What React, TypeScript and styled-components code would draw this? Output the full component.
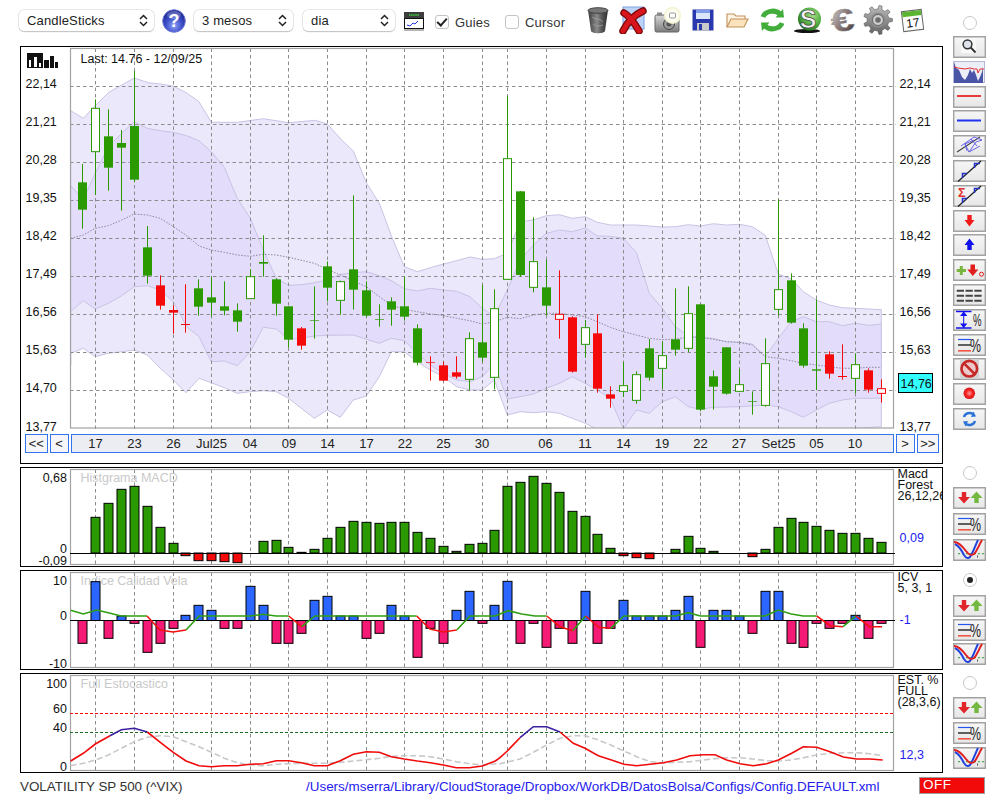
import React from "react";
import styled, { createGlobalStyle } from "styled-components";

const Global = createGlobalStyle`
  html, body { margin: 0; padding: 0; background: #fff; }
  body { font-family: "Liberation Sans", Arial, sans-serif; color: #222; }
`;

const Page = styled.div`
  width: 1000px;
  height: 800px;
  display: flex;
  flex-direction: column;
  overflow: hidden;
`;
const Toolbar = styled.div`
  height: 36px;
  padding: 4px 0 0 19px;
  box-sizing: border-box;
  display: flex;
  align-items: flex-start;
`;
const SelectBox = styled.div<{ $w: number; $ml?: number }>`
  width: ${(p) => p.$w}px;
  margin: 6px 0 0 ${(p) => p.$ml ?? 0}px;
  height: 21px;
  display: grid;
  align-items: center;
  background: #fff;
  border-radius: 5px;
  box-shadow: 0 0 0 0.5px #cfcfcf, 0 1px 1px #b9b9b9;
`;
const NativeSelect = styled.select`
  grid-area: 1 / 1;
  appearance: none;
  border: none;
  background: transparent;
  font: 13px "Liberation Sans", Arial, sans-serif;
  letter-spacing: 0.15px;
  color: #222;
  padding: 0 0 0 8px;
  height: 21px;
  width: 100%;
  outline: none;
`;
const Chevrons = styled.svg`
  grid-area: 1 / 1;
  justify-self: end;
  margin-right: 6px;
  width: 9px;
  height: 13px;
  pointer-events: none;
`;
const HelpSlot = styled.svg`
  margin: 5px 8px 0 8px;
  width: 24px;
  height: 24px;
`;
const WindowIcon = styled.svg`
  margin: 8px 0 0 9px;
  width: 20px;
  height: 20px;
`;
const Tick = styled.label<{ $ml: number; $w: number }>`
  margin: 11px 0 0 ${(p) => p.$ml}px;
  width: ${(p) => p.$w}px;
  display: flex;
  align-items: center;
  gap: 6px;
  font-size: 13px;
  letter-spacing: 0.2px;
  color: #333;
  height: 14px;
`;
const CheckInput = styled.input`
  appearance: none;
  margin: 0;
  width: 14px;
  height: 14px;
  box-sizing: border-box;
  border: 1px solid #c4c4c4;
  border-radius: 3px;
  background: #fff;
  display: grid;
  place-items: center;
  flex: none;
  &:checked::after {
    content: "";
    width: 4px;
    height: 8px;
    border: solid #222;
    border-width: 0 2px 2px 0;
    transform: translateY(-1px) rotate(42deg);
  }
`;
const IconRail = styled.div`
  margin-left: 11px;
  display: flex;
`;
const IconSlot = styled.div`
  width: 35px;
  height: 32px;
  display: flex;
  justify-content: center;
  align-items: center;
`;
const RadioInput = styled.input`
  appearance: none;
  margin: 0;
  width: 14px;
  height: 14px;
  box-sizing: border-box;
  border-radius: 50%;
  border: 1px solid #c8c8c8;
  background: #fff;
  display: grid;
  place-items: center;
  &:checked::after {
    content: "";
    width: 6px;
    height: 6px;
    border-radius: 50%;
    background: #222;
  }
`;
const TopRadio = styled.div`
  margin: 12px 0 0 33px;
  width: 14px;
  height: 14px;
  display: flex;
`;
const Body = styled.div`
  display: flex;
  height: 737px;
`;
const Charts = styled.div`
  margin: 10px 0 0 20px;
  width: 923px;
  display: flex;
  flex-direction: column;
  gap: 3px;
`;
const Panel = styled.section<{ $h: number }>`
  height: ${(p) => p.$h}px;
  box-sizing: border-box;
  border: 1px solid #000;
  background: #fff;
`;
const Plot = styled.svg<{ $h: number }>`
  display: block;
  width: 921px;
  height: ${(p) => p.$h}px;
  font-family: "Liberation Sans", Arial, sans-serif;
  font-size: 12.5px;
`;
const NavRow = styled.nav`
  padding-left: 4px;
  display: flex;
  gap: 2px;
  height: 19px;
`;
const NavBtn = styled.button<{ $w: number }>`
  width: ${(p) => p.$w}px;
  height: 19px;
  box-sizing: border-box;
  padding: 0;
  border: 1px solid #3473ee;
  background: #f6f6f8;
  font: 13px "Liberation Sans", Arial, sans-serif;
  color: #222;
`;
const DateBar = styled.div`
  width: 823px;
  height: 19px;
  box-sizing: border-box;
  border: 1px solid #3473ee;
  background: #ebedf3;
  position: relative;
`;
const DateLabel = styled.span`
  position: absolute;
  top: 1px;
  transform: translateX(-50%);
  font-size: 13px;
  line-height: 16px;
  color: #222;
`;
const Side = styled.aside`
  margin-left: 10px;
  width: 33px;
  display: flex;
  flex-direction: column;
`;
const BtnStack = styled.div<{ $gap: number }>`
  display: flex;
  flex-direction: column;
  gap: ${(p) => p.$gap}px;
`;
const ToolBtn = styled.button<{ $bare?: boolean }>`
  width: 33px;
  height: 22px;
  padding: 0;
  box-sizing: border-box;
  border: none;
  box-shadow: ${(p) => (p.$bare ? "none" : "inset 0 0 0 1.4px #a2a2a2")};
  background: ${(p) => (p.$bare ? "#fff" : "linear-gradient(#f7f7f7, #e6e6e6)")};
  display: block;
  svg {
    display: block;
    width: 33px;
    height: 22px;
  }
`;
const RadioGroup = styled.div<{ $h: number; $top: number }>`
  height: ${(p) => p.$h}px;
  margin-top: ${(p) => p.$top}px;
`;
const RadioRow = styled.div<{ $after: number }>`
  height: 14px;
  margin-bottom: ${(p) => p.$after}px;
  display: flex;
  justify-content: center;
`;
const Footer = styled.footer`
  height: 27px;
  padding-left: 20px;
  display: flex;
  align-items: center;
  font-size: 13.4px;
`;
const Symbol = styled.span`
  width: 286px;
  color: #333;
`;
const FilePath = styled.span`
  width: 613px;
  color: #2420ee;
  white-space: nowrap;
  letter-spacing: 0.02px;
`;
const OffLamp = styled.div`
  width: 66px;
  height: 17px;
  margin-bottom: 2px;
  box-sizing: border-box;
  border: 1.5px solid #9c9c9c;
  background: #f20a0a;
  color: #fff;
  font-size: 13.5px;
  line-height: 14px;
  padding-left: 3px;
  letter-spacing: 0.5px;
`;
const GreyTitle = styled.text`
  fill: #c9c9c9;
`;
const Blue = styled.text`
  fill: #2222ee;
`;
const Ink = styled.text<{ $end?: boolean }>`
  fill: #111;
  text-anchor: ${(p) => (p.$end ? "end" : "start")};
`;

/* ---------- data ---------- */
const XS = [
  82.3, 95.3, 108.3, 121.3, 134.3, 147.3, 160.3, 173.3, 185.3, 198.3, 211.3, 224.3, 237.3, 250.3, 263.3, 276.3, 288.3,
  301.3, 314.3, 327.3, 340.3, 353.3, 366.3, 379.3, 391.3, 404.3, 417.3, 430.3, 443.3, 456.3, 469.3, 482.3, 494.3,
  507.3, 520.3, 533.3, 546.3, 559.3, 572.3, 585.3, 597.3, 610.3, 623.3, 636.3, 649.3, 662.3, 675.3, 688.3, 700.3,
  713.3, 726.3, 739.3, 752.3, 765.3, 778.3, 791.3, 803.3, 816.3, 829.3, 842.3, 855.3, 868.3, 881.3,
];
const GRID_X = [95, 134, 173, 211, 250, 288, 327, 366, 404, 443, 482, 507, 546, 585, 623, 662, 700, 739, 778, 816, 855];
const GRID_Y = [86, 124, 162, 200, 238, 276, 314, 352, 390];

type C = [number, number, number, number, "g" | "w" | "r" | "h"];
const CANDLES: C[] = [
  [222, 416, 277, 359, "g"], [28, 315, 55, 185, "w"], [58, 302, 139, 233, "g"], [120, 362, 159, 173, "g"],
  [-57, 277, 108, 269, "g"], [408, 581, 472, 557, "g"], [556, 659, 586, 647, "r"], [646, 731, 660, 668, "r"],
  [583, 728, 702, 705, "r"], [568, 677, 595, 650, "g"], [560, 680, 622, 638, "g"], [574, 676, 649, 662, "g"],
  [640, 725, 661, 695, "g"], [538, 626, 560, 626, "w"], [436, 560, 516, 521, "g"], [565, 677, 568, 641, "g"],
  [649, 773, 649, 749, "g"], [711, 779, 715, 767, "r"], [589, 746, 690, 692, "g"], [514, 634, 529, 593, "g"],
  [572, 674, 575, 631, "w"], [316, 659, 538, 599, "g"], [574, 682, 601, 677, "g"], [643, 710, 688, 690, "g"],
  [622, 707, 634, 659, "g"], [560, 692, 649, 680, "g"], [703, 826, 715, 818, "g"], [799, 872, 817, 819, "r"],
  [815, 874, 826, 872, "r"], [799, 866, 847, 860, "r"], [727, 901, 746, 868, "w"], [585, 815, 757, 803, "g"],
  [598, 898, 656, 862, "w"], [18, 570, 206, 568, "w"], [303, 560, 304, 555, "g"], [382, 607, 515, 592, "w"],
  [509, 676, 592, 647, "g"], [541, 746, 673, 688, "h"], [679, 848, 682, 845, "r"], [690, 803, 713, 763, "w"],
  [673, 908, 730, 896, "r"], [889, 953, 913, 926, "r"], [816, 921, 887, 904, "w"], [844, 941, 854, 931, "w"],
  [747, 872, 775, 863, "g"], [754, 896, 797, 835, "w"], [595, 797, 748, 779, "g"], [589, 786, 671, 775, "w"],
  [643, 964, 643, 959, "g"], [841, 959, 859, 890, "g"], [772, 914, 772, 911, "g"], [837, 905, 884, 904, "w"],
  [904, 974, 934, 936, "g"], [745, 950, 821, 946, "w"], [328, 677, 599, 658, "w"], [550, 701, 571, 698, "g"],
  [700, 833, 715, 827, "g"], [628, 900, 838, 842, "g"], [784, 866, 793, 851, "r"], [763, 869, 858, 861, "r"],
  [790, 910, 824, 865, "w"], [835, 908, 841, 899, "r"], [868, 938, 896, 910, "h"],
];
const GREEN = "#2b9900";
const RED = "#f40a0a";

const MACD: (number | null)[] = [
  null, 172, 130, 88, 79, 139, 202, 250, 287, 302, 302, 305, 308, null, 244, 241, 262, 277, 268, 235, 202, 184, 187,
  190, 187, 187, 217, 235, 259, 274, 253, 250, 211, 79, 67, 49, 70, 97, 154, 169, 223, 265, 287, 293, 296, null, 268,
  229, 265, 274, null, null, 290, 268, 202, 175, 187, 199, 211, 220, 220, 235, 247,
];
const ICV = [
  550, 365, 535, 468, 490, 577, 550, 505, 466, 436, 451, 505, 505, 379, 436, 550, 550, 520, 421, 409, 468, 468, 535,
  520, 436, 468, 592, 505, 550, 451, 394, 490, 436, 364, 550, 490, 562, 505, 550, 394, 550, 505, 421, 468, 468, 468,
  451, 409, 562, 451, 451, 468, 520, 394, 394, 550, 562, 490, 505, 490, 466, 535, 490,
];

type P = [number, number];
const z5 = (pts: P[]): P[] => pts.map(([x, y]) => [x / 3, 90 + y / 3]);
const z6 = (pts: P[]): P[] => pts.map(([x, y]) => [440 + x / 3, 90 + y / 3]);
const line = (pts: P[]) => pts.map(([x, y]) => `${x.toFixed(1)},${y.toFixed(1)}`).join(" ");

const outerUp = [
  ...z5([[212, 62], [250, 85], [286, 47], [325, 8], [365, -15], [403, -36], [445, -22], [480, -18], [520, -12], [560, 9], [597, 35], [634, 97], [712, 97], [790, 86], [866, 98], [946, 91], [982, 102], [1025, 150], [1060, 183], [1099, 278], [1138, 340], [1175, 440], [1213, 530], [1252, 545], [1291, 533]]),
  ...z6([[0, 525], [50, 512], [90, 501], [127, 508], [163, 506], [202, 490], [241, 395], [280, 390], [319, 377], [358, 374], [397, 385], [436, 380], [472, 397], [511, 405], [589, 405], [628, 408], [667, 411], [706, 410], [745, 404], [781, 408], [820, 401], [859, 405], [898, 403], [937, 410], [976, 436], [1015, 552], [1054, 567], [1090, 605], [1129, 630], [1168, 645], [1207, 653], [1246, 655], [1285, 657], [1324, 659]]),
];
const outerLow = [
  ...z5([[212, 825], [212, 790], [250, 775], [286, 800], [325, 790], [365, 785], [403, 780], [442, 795], [481, 835], [520, 870], [558, 908], [597, 865], [634, 878], [673, 893], [712, 910], [751, 905], [790, 902], [829, 905], [866, 925], [904, 955], [943, 985], [982, 960], [1021, 982], [1060, 930], [1099, 918], [1138, 860], [1174, 785], [1213, 785], [1252, 815], [1291, 840]]),
  ...z6([[10, 860], [50, 890], [90, 900], [127, 900], [163, 870], [202, 975], [241, 965], [280, 968], [319, 965], [358, 970], [397, 985], [436, 1000], [472, 1018], [511, 1025], [550, 1030], [589, 1025], [745, 1030], [1130, 1022], [1246, 1015], [1324, 1010]]),
];
const innerUp = [
  ...z5([[212, 287], [250, 328], [286, 250], [325, 170], [365, 130], [403, 95], [442, 115], [481, 122], [520, 127], [560, 137], [597, 152], [634, 185], [673, 232], [712, 325], [751, 385], [790, 480], [829, 565], [866, 586], [904, 584], [943, 578], [982, 570], [1021, 553], [1060, 548], [1099, 545], [1138, 557], [1174, 572], [1213, 596], [1252, 603], [1291, 595]]),
  ...z6([[10, 600], [50, 604], [90, 620], [127, 655], [163, 680], [202, 600], [241, 510], [280, 465], [319, 430], [358, 420], [397, 425], [436, 414], [472, 438], [511, 439], [550, 445], [589, 487], [628, 610], [667, 655], [706, 710], [745, 738], [781, 742], [820, 745], [859, 755], [898, 757], [937, 762], [976, 800], [1015, 745], [1054, 695], [1090, 680], [1129, 695], [1168, 695], [1207, 707], [1246, 700], [1285, 706], [1324, 702]]),
];
const innerLow = [
  ...z5([[212, 664], [250, 632], [286, 657], [325, 640], [365, 617], [403, 590], [442, 587], [481, 600], [520, 635], [560, 710], [597, 740], [634, 815], [673, 813], [712, 827], [751, 785], [790, 712], [829, 717], [866, 748], [904, 745], [943, 738], [982, 736], [1060, 735], [1099, 748], [1138, 760], [1174, 745], [1213, 752], [1252, 790], [1291, 825]]),
  ...z6([[10, 850], [50, 870], [90, 875], [127, 860], [163, 820], [202, 927], [241, 920], [280, 912], [319, 895], [358, 880], [397, 860], [436, 880], [472, 900], [511, 925], [550, 1017], [589, 960], [628, 970], [667, 935], [706, 920], [745, 950], [781, 958], [820, 952], [898, 950], [976, 945], [1015, 950], [1054, 965], [1090, 982], [1129, 960], [1168, 940], [1207, 930], [1246, 925], [1324, 925]]),
];
const midLine = [
  ...z5([[212, 445], [250, 435], [286, 415], [325, 407], [365, 390], [403, 372], [442, 375], [481, 385], [520, 410], [560, 437], [597, 468], [634, 480], [673, 487], [712, 495], [751, 499], [790, 493], [829, 495], [866, 502], [943, 520], [982, 538], [1021, 555], [1099, 590], [1138, 620], [1174, 645], [1213, 658], [1252, 665], [1291, 672]]),
  ...z6([[0, 675], [50, 685], [90, 692], [127, 702], [163, 695], [202, 682], [241, 686], [280, 675], [319, 670], [358, 670], [397, 675], [436, 680], [472, 695], [511, 712], [550, 725], [589, 735], [628, 745], [667, 749], [706, 747], [745, 742], [781, 742], [820, 748], [859, 755], [898, 757], [937, 765], [976, 800], [1015, 805], [1054, 812], [1090, 820], [1129, 825], [1168, 830], [1207, 835], [1246, 835], [1285, 832], [1324, 832]]),
];

const yz = (off: number, pts: P[], xo = 0): P[] => pts.map(([x, y]) => [xo + x / 3, off + y / 3]);
const ICV_SEGS: { c: string; p: P[] }[] = [
  { c: "#2f9e12", p: yz(460, [[212, 451], [250, 462], [290, 450], [325, 458], [363, 468], [441, 468]]) },
  { c: "#f41010", p: yz(460, [[441, 468], [480, 510], [519, 516], [558, 510]]) },
  { c: "#2f9e12", p: yz(460, [[558, 510], [597, 468], [750, 468], [790, 463], [828, 468], [866, 468]]) },
  { c: "#f41010", p: yz(460, [[866, 468], [905, 500]]) },
  { c: "#2f9e12", p: yz(460, [[905, 500], [945, 468], [1250, 468]]) },
  { c: "#f41010", p: yz(460, [[1250, 468], [1290, 507], [1330, 516], [1370, 510]]) },
  { c: "#2f9e12", p: yz(460, [[50, 510], [90, 468], [165, 468], [205, 452], [245, 462], [285, 468], [320, 468]], 440) },
  { c: "#f41010", p: yz(460, [[320, 468], [360, 500], [398, 512]], 440) },
  { c: "#2f9e12", p: yz(460, [[398, 512], [437, 468]], 440) },
  { c: "#f41010", p: yz(460, [[437, 468], [476, 502], [512, 505]], 440) },
  { c: "#2f9e12", p: yz(460, [[512, 505], [552, 468], [706, 468], [745, 458], [781, 468], [975, 468], [1015, 450], [1054, 462], [1090, 468], [1130, 468]], 440) },
  { c: "#f41010", p: yz(460, [[1130, 468], [1170, 497], [1209, 500]], 440) },
  { c: "#2f9e12", p: yz(460, [[1209, 500], [1248, 468]], 440) },
  { c: "#f41010", p: yz(460, [[1248, 468], [1288, 500], [1326, 500]], 440) },
];
const STO_RED: P[] = [
  ...yz(665, [[212, 288], [250, 265], [286, 237], [330, 212]]),
];
const STO_RED2: P[] = [
  ...yz(665, [[442, 201], [481, 232], [520, 262], [558, 288], [597, 302], [634, 305], [673, 302], [712, 302], [751, 298], [790, 296], [829, 287], [866, 287], [904, 293], [943, 302], [982, 302], [1021, 287], [1060, 268], [1099, 260], [1138, 262], [1174, 275], [1213, 282], [1252, 288], [1291, 293], [1330, 300], [1369, 308], [1408, 308], [1447, 303], [1486, 288]]),
  ...yz(665, [[0, 278], [22, 258], [60, 218]], 500),
];
const STO_RED3: P[] = yz(665, [[180, 201], [220, 235], [255, 250], [295, 272], [332, 284], [372, 298], [410, 302], [450, 298], [490, 293], [530, 285], [570, 272], [610, 269], [645, 269], [680, 285], [720, 296], [760, 302], [800, 296], [835, 285], [875, 265], [910, 245], [950, 247], [990, 260], [1030, 276], [1070, 282], [1110, 282], [1148, 285]], 500);
const STO_BLUE1: P[] = yz(665, [[330, 212], [364, 194], [403, 190], [442, 201]]);
const STO_BLUE2: P[] = yz(665, [[60, 218], [100, 185], [140, 185], [180, 201]], 500);
const STO_GREY: P[] = [
  ...yz(665, [[212, 302], [250, 295], [286, 285], [325, 270], [364, 250], [403, 230], [442, 217], [481, 212], [520, 215], [558, 230], [597, 245], [634, 262], [673, 280], [712, 293], [751, 300], [790, 302], [829, 298], [866, 296], [904, 295], [982, 295], [1021, 292], [1060, 288], [1099, 284], [1138, 280], [1174, 274], [1213, 272], [1252, 272], [1291, 275], [1330, 282], [1369, 290], [1408, 296], [1447, 300], [1486, 296]]),
  ...yz(665, [[0, 296], [60, 282], [100, 262], [140, 240], [180, 220], [220, 212], [255, 212], [295, 225], [332, 240], [372, 258], [410, 275], [450, 290], [490, 294], [530, 292], [570, 290], [610, 285], [645, 281], [680, 278], [720, 278], [760, 282], [800, 287], [835, 288], [875, 285], [910, 278], [950, 270], [990, 265], [1030, 263], [1070, 263], [1110, 266], [1148, 272]], 500),
];
const DATES: [string, number][] = [
  ["17", 95], ["23", 134], ["26", 173], ["Jul25", 211], ["04", 249.5], ["09", 288.5], ["14", 327], ["17", 366],
  ["22", 404.5], ["25", 443], ["30", 481.5], ["06", 545], ["11", 584.5], ["14", 623], ["19", 661.5], ["22", 700],
  ["27", 738.5], ["Set25", 778], ["05", 816], ["10", 854.5],
];
const PRICES: [string, number][] = [
  ["22,14", 87.6], ["21,21", 125.9], ["20,28", 163.9], ["19,35", 201.9], ["18,42", 239.9], ["17,49", 277.9],
  ["16,56", 315.9], ["15,63", 353.9], ["14,70", 391.9], ["13,77", 431],
];

/* ---------- chart pieces ---------- */
const snap = (v: number) => Math.floor(v) + 0.5;
const GridFrame = ({ top, bottom }: { top: number; bottom: number }) => (
  <>
    {GRID_X.map((x) => (
      <line key={x} x1={x + 0.5} x2={x + 0.5} y1={top} y2={bottom + 2} stroke="#8c8c8c" strokeDasharray="3.5 3" />
    ))}
    <rect x={70.5} y={top} width={823} height={bottom - top} fill="none" stroke="#a2a2a2" strokeWidth={1.2} />
  </>
);
const Candle = ({ i, c }: { i: number; c: C }) => {
  const [wt, wb, bt, bb, t] = c;
  const x = snap(XS[i]);
  const col = t === "g" || t === "w" ? GREEN : RED;
  const hollow = t === "w" || t === "h";
  const Y = (v: number) => 90 + v / 3;
  return (
    <>
      <line x1={x} x2={x} y1={Y(wt)} y2={Y(wb)} stroke={col} />
      {hollow ? (
        <rect x={x - 4} y={Y(bt)} width={8} height={Y(bb) - Y(bt)} fill="#fff" stroke={col} />
      ) : (
        <rect x={x - 4.5} y={Y(bt)} width={9} height={Y(bb) - Y(bt)} fill={col} />
      )}
    </>
  );
};
const Bar = ({ x, y0, y1, fill }: { x: number; y0: number; y1: number; fill: string }) => (
  <rect
    x={snap(x) - 4.5}
    y={Math.min(y0, y1)}
    width={9}
    height={Math.abs(y1 - y0)}
    fill={fill}
    stroke="#000"
    strokeWidth={1}
  />
);

const MainChart = () => (
  <Plot $h={387} viewBox="21 47 921 387">
    <defs>
      <clipPath id="plotClip">
        <rect x={70.5} y={48.5} width={823} height={379.5} />
      </clipPath>
    </defs>
    <g clipPath="url(#plotClip)">
      <polygon points={line([...outerUp, ...outerLow.slice().reverse()])} fill="#ebe8fc" stroke="#c8c3e3" />
      <polygon points={line([...innerUp, ...innerLow.slice().reverse()])} fill="#e3dcfb" stroke="#c8c3e3" />
      <polyline points={line(midLine)} fill="none" stroke="#8d8799" strokeDasharray="1.5 1.5" />
    </g>
    {GRID_Y.map((y) => (
      <line key={y} x1={70} x2={896} y1={y + 0.5} y2={y + 0.5} stroke="#8c8c8c" strokeDasharray="3.5 3" />
    ))}
    <GridFrame top={48.5} bottom={428} />
    {CANDLES.map((c, i) => (
      <Candle key={i} i={i} c={c} />
    ))}
    <path d="M27 53h16v15H27z" fill="#111" />
    <path d="M29 60h2v7h-2zM34 57h3v10h-3zM39 63h2v4h-2z" fill="#fff" />
    <path d="M44 60h5v8h-5zM50 56h4v12h-4zM55 62h3v6h-3z" fill="#111" />
    <Ink x={80.5} y={63}>Last: 14.76 - 12/09/25</Ink>
    {PRICES.map(([t, y]) => (
      <Ink key={t} x={25.5} y={y}>{t}</Ink>
    ))}
    {PRICES.filter(([t]) => t !== "14,70").map(([t, y]) => (
      <Ink key={t} x={899.5} y={y}>{t}</Ink>
    ))}
    <rect x={898.5} y={373.5} width={34} height={19} fill="#33ffff" stroke="#000" />
    <Ink x={900.5} y={388}>14,76</Ink>
  </Plot>
);

const MacdChart = () => (
  <Plot $h={98} viewBox="21 468 921 98">
    <GridFrame top={469.5} bottom={564.5} />
    <GreyTitle x={80.5} y={481.5}>Histgrama MACD</GreyTitle>
    {MACD.map((v, i) =>
      v === null ? null : (
        <Bar key={i} x={XS[i]} y0={553} y1={460 + v / 3} fill={v > 280 ? RED : GREEN} />
      ),
    )}
    <line x1={70} x2={895} y1={553.5} y2={553.5} stroke="#000" />
    <Ink $end x={67} y={481.6}>0,68</Ink>
    <Ink $end x={67} y={552.6}>0</Ink>
    <Ink $end x={67} y={565}>-0,09</Ink>
    <Ink x={897.5} y={477.6}>Macd</Ink>
    <Ink x={897.5} y={489}>Forest</Ink>
    <Ink x={897.5} y={500}>26,12,26</Ink>
    <Blue x={899.5} y={542}>0,09</Blue>
  </Plot>
);

const IcvChart = () => (
  <Plot $h={98} viewBox="21 571 921 98">
    <GridFrame top={572.5} bottom={667.5} />
    <GreyTitle x={80.5} y={585}>Indice Calidad Vela</GreyTitle>
    {ICV.map((v, i) => (
      <Bar key={i} x={XS[i]} y0={620.5} y1={460 + v / 3} fill={v > 481 ? "#f41a75" : "#2a66ff"} />
    ))}
    <line x1={70} x2={895} y1={620.5} y2={620.5} stroke="#000" />
    {ICV_SEGS.map((s, i) => (
      <polyline key={i} points={line(s.p)} fill="none" stroke={s.c} strokeWidth={1.6} />
    ))}
    <Ink $end x={67} y={585}>10</Ink>
    <Ink $end x={67} y={620}>0</Ink>
    <Ink $end x={67} y={667.6}>-10</Ink>
    <Ink x={897.5} y={581}>ICV</Ink>
    <Ink x={897.5} y={592}>5, 3, 1</Ink>
    <Blue x={899.5} y={623.6}>-1</Blue>
  </Plot>
);

const StochChart = () => (
  <Plot $h={98} viewBox="21 674 921 98">
    <GridFrame top={675.5} bottom={770.5} />
    <GreyTitle x={80.5} y={688.3}>Full Estocastico</GreyTitle>
    <line x1={70} x2={895} y1={713.5} y2={713.5} stroke="#f00" strokeDasharray="3 2" />
    <line x1={70} x2={895} y1={732.5} y2={732.5} stroke="#1f6b1f" strokeDasharray="3 2" />
    <polyline points={line(STO_GREY)} fill="none" stroke="#c8c8c8" strokeWidth={1.6} strokeDasharray="6 3" />
    {[STO_RED, STO_RED2, STO_RED3].map((p, i) => (
      <polyline key={i} points={line(p)} fill="none" stroke="#f00a0a" strokeWidth={1.6} />
    ))}
    {[STO_BLUE1, STO_BLUE2].map((p, i) => (
      <polyline key={i} points={line(p)} fill="none" stroke="#3a1f9f" strokeWidth={1.6} />
    ))}
    <Ink $end x={67} y={688.3}>100</Ink>
    <Ink $end x={67} y={713.3}>60</Ink>
    <Ink $end x={67} y={732}>40</Ink>
    <Ink $end x={67} y={771}>0</Ink>
    <Ink x={897.5} y={684.3}>EST. %</Ink>
    <Ink x={897.5} y={695.3}>FULL</Ink>
    <Ink x={897.5} y={706}>(28,3,6)</Ink>
    <Blue x={899.5} y={759.3}>12,3</Blue>
  </Plot>
);

/* ---------- toolbar icons ---------- */
const Sel = ({ w, ml, value }: { w: number; ml?: number; value: string }) => (
  <SelectBox $w={w} $ml={ml}>
    <NativeSelect defaultValue={value}>
      <option>{value}</option>
    </NativeSelect>
    <Chevrons viewBox="0 0 9 13">
      <path d="M1 5 4.5 1.5 8 5M1 8l3.5 3.5L8 8" fill="none" stroke="#222" strokeWidth={1.5} />
    </Chevrons>
  </SelectBox>
);
const HelpIcon = () => (
  <HelpSlot viewBox="0 0 24 24">
    <defs>
      <radialGradient id="helpG" cx="50%" cy="70%" r="60%">
        <stop offset="0" stopColor="#8fa2f5" />
        <stop offset="0.6" stopColor="#3d4ec9" />
        <stop offset="1" stopColor="#222a96" />
      </radialGradient>
    </defs>
    <circle cx={12} cy={12} r={11.3} fill="url(#helpG)" stroke="#6e79d8" />
    <ellipse cx={12} cy={6} rx={7} ry={4} fill="#fff" opacity={0.25} />
    <text x={12} y={18} textAnchor="middle" fontFamily="Liberation Sans" fontWeight={700} fontSize={18} fill="#fff">?</text>
  </HelpSlot>
);
const ChartWin = () => (
  <WindowIcon viewBox="0 0 20 20">
    <rect x={0} y={0} width={20} height={6} fill="#3d3d3d" />
    <path d="M5 3h10" stroke="#3ccf3c" strokeWidth={1.4} strokeDasharray="1.5 .6" />
    <rect x={0.5} y={6.5} width={19} height={10} fill="#fff" stroke="#111" />
    <path d="M3 13l3 1 3-3 2 1 3-3" fill="none" stroke="#2233dd" />
    <rect x={0} y={17} width={20} height={2} fill="#b5b5b5" />
  </WindowIcon>
);
const TrashIcon = () => (
  <svg width={22} height={27} viewBox="0 0 22 27">
    <defs>
      <linearGradient id="trashG" x1="0" x2="1" y1="0" y2="0">
        <stop offset="0" stopColor="#3c3c3c" />
        <stop offset="0.45" stopColor="#8a8a8a" />
        <stop offset="0.7" stopColor="#555" />
        <stop offset="1" stopColor="#2e2e2e" />
      </linearGradient>
    </defs>
    <path d="M1 3 4 24c1 3 13 3 14 0L21 3z" fill="url(#trashG)" />
    <ellipse cx={11} cy={3.5} rx={10} ry={2.8} fill="#777" stroke="#444" />
    <path d="M5 10c4 3 8 1 11 5M6 17c3 3 7 2 10 1" stroke="#b5b5b5" fill="none" opacity={0.6} />
  </svg>
);
const CrossIcon = () => (
  <svg width={28} height={28} viewBox="0 0 28 28">
    <rect x={4} y={1} width={21} height={22} fill="#bcd3f7" stroke="#7ea2e0" />
    <path d="M5 7c6 3 11 11 15 18M24 5C15 9 8 17 4 25" fill="none" stroke="#7b0a0a" strokeWidth={7.5} strokeLinecap="round" />
    <path d="M5 7c6 3 11 11 15 18M24 5C15 9 8 17 4 25" fill="none" stroke="#d8141c" strokeWidth={4.8} strokeLinecap="round" />
  </svg>
);
const CameraIcon = () => (
  <svg width={28} height={26} viewBox="0 0 28 26">
    <defs>
      <linearGradient id="camG" x1="0" x2="0" y1="0" y2="1">
        <stop offset="0" stopColor="#d8d8d8" />
        <stop offset="1" stopColor="#7c7c7c" />
      </linearGradient>
      <radialGradient id="glowG">
        <stop offset="0" stopColor="#fff" />
        <stop offset="0.7" stopColor="#fdfdf0" />
        <stop offset="1" stopColor="#f1efc5" />
      </radialGradient>
    </defs>
    <rect x={1} y={8} width={24} height={17} rx={1.5} fill="url(#camG)" stroke="#666" />
    <rect x={3} y={5.5} width={5} height={3} fill="#888" />
    <circle cx={15} cy={17} r={5.5} fill="#9a9a9a" stroke="#444" />
    <circle cx={15} cy={17} r={2.5} fill="#555" />
    <circle cx={18.5} cy={8.5} r={8.5} fill="url(#glowG)" />
    <rect x={15.5} y={6} width={6} height={5} rx={1} fill="none" stroke="#999" />
  </svg>
);
const SaveIcon = () => (
  <svg width={22} height={22} viewBox="0 0 22 22">
    <path d="M.5.5h21v21H.5z" fill="#2b38ad" />
    <rect x={4} y={1} width={14} height={9} fill="#dbe6fb" />
    <rect x={4} y={1} width={14} height={3} fill="#7e9ae8" />
    <rect x={5} y={14} width={12} height={7.5} fill="#c9c9c9" />
    <rect x={7} y={15} width={3} height={6} fill="#2b38ad" />
  </svg>
);
const FolderIcon = () => (
  <svg width={23} height={18} viewBox="0 0 23 18">
    <path d="M1 16V3h7l2 2h9v3" fill="#fdf4e3" stroke="#c4925a" strokeWidth={1.1} />
    <path d="M1 16 5 8h17l-4 8z" fill="#fbe3bd" stroke="#c4925a" strokeWidth={1.1} />
  </svg>
);
const RefreshIcon = () => (
  <svg width={25} height={24} viewBox="0 0 25 24">
    <path d="M3 9C5 3 15 1 20 6" fill="none" stroke="#43ad3c" strokeWidth={5} />
    <path d="M15.5 9.5 24 9.5 23 1z" fill="#43ad3c" />
    <path d="M22 15c-2 6-12 8-17 3" fill="none" stroke="#43ad3c" strokeWidth={5} />
    <path d="M9.5 14.5 1 14.5 2 23z" fill="#43ad3c" />
  </svg>
);
const CoinIcon = () => (
  <svg width={28} height={26} viewBox="0 0 28 26" overflow="visible">
    <defs>
      <radialGradient id="coinG" cx="62%" cy="35%" r="65%">
        <stop offset="0" stopColor="#a6de86" />
        <stop offset="0.7" stopColor="#4aa83c" />
        <stop offset="1" stopColor="#2d7a24" />
      </radialGradient>
    </defs>
    <ellipse cx={13} cy={24} rx={13} ry={2} fill="#111" />
    <circle cx={15.5} cy={12} r={11.5} fill="url(#coinG)" />
    <text x={14} y={21} textAnchor="middle" fontFamily="Liberation Sans" fontWeight={700} fontSize={25} fill="#f2f2f2" stroke="#444" strokeWidth={0.7}>S</text>
  </svg>
);
const EuroIcon = () => (
  <svg width={27} height={26} viewBox="0 0 27 26" overflow="visible">
    <defs>
      <linearGradient id="euroG" x1="0" x2="1" y1="0" y2="1">
        <stop offset="0" stopColor="#e4e4e4" />
        <stop offset="0.5" stopColor="#8a7878" />
        <stop offset="1" stopColor="#3d2d2d" />
      </linearGradient>
    </defs>
    <g transform="translate(13.5 13) rotate(-8) scale(1.35 1) translate(-13.5 -13)">
      <text x={13.5} y={24} textAnchor="middle" fontFamily="Liberation Sans" fontWeight={700} fontSize={31} fill="url(#euroG)" stroke="#8a8a8a" strokeWidth={0.4}>€</text>
    </g>
  </svg>
);
const gearPath = (cx: number, cy: number, R: number, r: number, n: number) => {
  const pts: string[] = [];
  for (let i = 0; i < n; i++) {
    const a = (i * 2 * Math.PI) / n;
    const s = Math.PI / n;
    [[-0.55, r], [-0.3, R], [0.3, R], [0.55, r]].forEach(([d, rad]) => {
      const t = a + d * s * 1.0;
      pts.push(`${(cx + rad * Math.cos(t)).toFixed(2)},${(cy + rad * Math.sin(t)).toFixed(2)}`);
    });
  }
  return pts.join(" ");
};
const GearIcon = () => (
  <svg width={30} height={30} viewBox="0 0 30 30">
    <defs>
      <linearGradient id="gearG" x1="0" x2="0" y1="0" y2="1">
        <stop offset="0" stopColor="#bdbdbd" />
        <stop offset="1" stopColor="#626262" />
      </linearGradient>
    </defs>
    <polygon points={gearPath(15, 15, 14.5, 11, 9)} fill="url(#gearG)" stroke="#5c5c5c" strokeWidth={0.6} />
    <circle cx={15} cy={15} r={7.5} fill="#8d8d8d" />
    <circle cx={15} cy={15} r={5.5} fill="#cfcfcf" stroke="#666" />
    <circle cx={15} cy={15} r={2.8} fill="#6c6c6c" />
  </svg>
);
const CalendarIcon = () => (
  <svg width={25} height={25} viewBox="0 0 25 25">
    <g transform="rotate(-7 12.5 12.5)">
      <rect x={2.5} y={2.5} width={20} height={20} fill="#fff" stroke="#666" />
      <rect x={3} y={3} width={19} height={5} fill="#5cb531" />
      <text x={12.5} y={19} textAnchor="middle" fontFamily="Liberation Sans" fontSize={12} fill="#111">17</text>
    </g>
  </svg>
);

/* ---------- side button glyphs ---------- */
const Glyph = ({ children }: { children: React.ReactNode }) => <svg viewBox="0 0 33 22">{children}</svg>;
const DownArrow = ({ x, c, h = 5.5 }: { x: number; c: string; h?: number }) => (
  <path d={`M${x - 2.2} 5h4.4v5h${h - 2.2}l-${h} 6.5-${h}-6.5h${h - 2.2}z`} fill={c} />
);
const UpArrow = ({ x, c, h = 5.5 }: { x: number; c: string; h?: number }) => (
  <path d={`M${x - 2.2} 16h4.4v-5h${h - 2.2}l-${h}-6.5-${h} 6.5h${h - 2.2}z`} fill={c} />
);
const Pct = ({ x, y, size, w }: { x: number; y: number; size: number; w: number }) => (
  <text x={x} y={y} fontFamily="Liberation Sans" fontSize={size} fill="#222" textLength={w} lengthAdjust="spacingAndGlyphs">%</text>
);
const LinesPct = () => (
  <Glyph>
    <path d="M5 5.5h13" stroke="#2255ee" strokeWidth={1.2} />
    <path d="M5 11h13" stroke="#222" strokeWidth={1.4} />
    <path d="M5 16.8h13" stroke="#ee5544" strokeWidth={1.6} />
    <Pct x={17} y={18} size={18} w={11} />
  </Glyph>
);
const RedGreen = () => (
  <Glyph>
    <DownArrow x={11} c="#e0262a" h={6} />
    <UpArrow x={23.5} c="#73b840" h={6} />
  </Glyph>
);
const Curves = () => (
  <Glyph>
    <path d="M5 14.7h26" stroke="#2a9a2a" strokeDasharray="2 2" />
    <path d="M24.5 16.5v2" stroke="#555" />
    <path d="M2 5c4 2 7 7 9 11 2 3 4 4 6 2 3-4 5-11 8-17" fill="none" stroke="#2244dd" strokeWidth={2} />
    <path d="M1 3c5 0 9 5 12 9 3 4 5 5 8 3 3-3 5-9 8-14" fill="none" stroke="#e02020" strokeWidth={2} />
  </Glyph>
);
const ChannelArrows = ({ sigma }: { sigma?: boolean }) => (
  <Glyph>
    <path d="M5 21.5 28 1" stroke="#222" strokeWidth={1.3} />
    <path d="M14 13.5H9.5V18M27 3.5H21.500V8" fill="none" stroke="#2233cc" strokeWidth={1.5} />
    {sigma && <text x={5} y={12} fontFamily="Liberation Sans" fontWeight={700} fontSize={12.5} fill="#e23030">Σ</text>}
  </Glyph>
);

const SideButtons: { key: string; bare?: boolean; g: React.ReactNode }[] = [
  {
    key: "zoom",
    g: (
      <Glyph>
        <rect x={8} y={2.3} width={15} height={15} fill="#f8f8f8" />
        <circle cx={14.5} cy={8.3} r={4.4} fill="#dde3ea" stroke="#333" strokeWidth={1.5} />
        <path d="M17.6 11.400 22.500 16.500" stroke="#333" strokeWidth={2} />
      </Glyph>
    ),
  },
  {
    key: "profile",
    bare: true,
    g: (
      <Glyph>
        <rect x={0.5} y={0.5} width={31} height={21} fill="#eceef8" stroke="#b7b9d8" />
        <path d="M1 22V1L3 7l3 2 3 7 3 3 3-5 2-6 2 4 2-3 2 5 2 6 2-4 2-5 1-5v16z" fill="#4a55a8" />
        <path d="M1 6l4 1 7 1 5-1 4 1h3l1 4 2-4h4" fill="none" stroke="#e83030" />
      </Glyph>
    ),
  },
  { key: "red", g: <Glyph><path d="M4 10h24" stroke="#e83a3a" strokeWidth={2} /></Glyph> },
  { key: "blue", g: <Glyph><path d="M4 10.5h24" stroke="#2233ee" strokeWidth={2} /></Glyph> },
  {
    key: "chan",
    g: (
      <Glyph>
        <path d="M4 17 27 2" stroke="#444" strokeWidth={1.1} />
        <path d="M8 11 21 2l8 3-6 2-7 10 11-6M12 9l4 8M18 4l6 7M14 16l-2-7 9-4" fill="none" stroke="#5b55e8" strokeWidth={0.9} />
      </Glyph>
    ),
  },
  { key: "tr", g: <ChannelArrows /> },
  { key: "sum", g: <ChannelArrows sigma /> },
  { key: "dn", g: <Glyph><DownArrow x={16.5} c="#f21a1a" h={5} /></Glyph> },
  { key: "up", g: <Glyph><UpArrow x={16.5} c="#1111ee" h={5} /></Glyph> },
  {
    key: "plus",
    g: (
      <Glyph>
        <path d="M3.700 11.500h9.300M8.300 7v9" stroke="#79b53f" strokeWidth={3} />
        <path d="M17.500 5.500h4.500v5h3.300l-5.500 6.500-5.500-6.500h3.200z" fill="#e01e1e" />
        <circle cx={28.5} cy={15.2} r={2} fill="none" stroke="#e01e1e" />
      </Glyph>
    ),
  },
  {
    key: "dash",
    g: (
      <Glyph>
        <path d="M3.700 6.700h25M3.700 11.700h25M3.700 16.700h25" stroke="#444" strokeWidth={2} strokeDasharray="7.300 1.500" />
      </Glyph>
    ),
  },
  {
    key: "hpct",
    g: (
      <Glyph>
        <path d="M3 2.500h15.500M3 19h15.500" stroke="#1111ee" strokeWidth={1.4} />
        <path d="M10.700 3v15.500" stroke="#1111ee" />
        <path d="M7 7l3.700-4.500L14.400 7zM7 14.500l3.700 4.500 3.700-4.500z" fill="#1111ee" />
        <Pct x={20} y={17} size={16} w={8.5} />
      </Glyph>
    ),
  },
  { key: "lpct", g: <LinesPct /> },
  {
    key: "stop",
    g: (
      <Glyph>
        <rect x={7} y={1} width={19} height={20} fill="#d2d2d2" />
        <circle cx={16.3} cy={10.7} r={7.8} fill="#ecc8c8" stroke="#c62828" strokeWidth={2.6} />
        <path d="M10.800 5.200l11 11" stroke="#c62828" strokeWidth={2.6} />
      </Glyph>
    ),
  },
  {
    key: "rec",
    g: (
      <Glyph>
        <defs>
          <radialGradient id="recG">
            <stop offset="0" stopColor="#ff9c9c" />
            <stop offset="0.6" stopColor="#f42020" />
            <stop offset="1" stopColor="#d81818" />
          </radialGradient>
        </defs>
        <circle cx={16.3} cy={10.3} r={5.8} fill="url(#recG)" />
      </Glyph>
    ),
  },
  {
    key: "cyc",
    g: (
      <Glyph>
        <path d="M11 9c1-4 6-5 9-3" fill="none" stroke="#2a72d6" strokeWidth={2.4} />
        <path d="M18 9l5-.5-2.500-5z" fill="#2a72d6" />
        <path d="M22 13c-1 4-6 5-9 3" fill="none" stroke="#2a72d6" strokeWidth={2.4} />
        <path d="M15 13l-5 .5 2.500 5z" fill="#2a72d6" />
      </Glyph>
    ),
  },
];

const ThreeButtons = ({ gap }: { gap: number }) => (
  <BtnStack $gap={gap}>
    <ToolBtn type="button"><RedGreen /></ToolBtn>
    <ToolBtn type="button"><LinesPct /></ToolBtn>
    <ToolBtn type="button"><Curves /></ToolBtn>
  </BtnStack>
);

const App = () => (
  <Page>
    <Global />
    <Toolbar>
      <Sel w={135} value="CandleSticks" />
      <HelpIcon />
      <Sel w={99} value="3 mesos" />
      <Sel w={92} ml={10} value="dia" />
      <ChartWin />
      <Tick $ml={11} $w={70}>
        <CheckInput type="checkbox" defaultChecked />
        Guies
      </Tick>
      <Tick $ml={0} $w={64}>
        <CheckInput type="checkbox" />
        Cursor
      </Tick>
      <IconRail>
        <IconSlot><TrashIcon /></IconSlot>
        <IconSlot><CrossIcon /></IconSlot>
        <IconSlot><CameraIcon /></IconSlot>
        <IconSlot><SaveIcon /></IconSlot>
        <IconSlot><FolderIcon /></IconSlot>
        <IconSlot><RefreshIcon /></IconSlot>
        <IconSlot><CoinIcon /></IconSlot>
        <IconSlot><EuroIcon /></IconSlot>
        <IconSlot><GearIcon /></IconSlot>
        <IconSlot><CalendarIcon /></IconSlot>
      </IconRail>
      <TopRadio>
        <RadioInput type="radio" name="main" />
      </TopRadio>
    </Toolbar>
    <Body>
      <Charts>
        <Panel $h={418}>
          <MainChart />
          <NavRow>
            <NavBtn type="button" $w={22.5}>&lt;&lt;</NavBtn>
            <NavBtn type="button" $w={19}>&lt;</NavBtn>
            <DateBar>
              {DATES.map(([t, x], i) => (
                <DateLabel key={i} style={{ left: x - 71 }}>{t}</DateLabel>
              ))}
            </DateBar>
            <NavBtn type="button" $w={19}>&gt;</NavBtn>
            <NavBtn type="button" $w={22.5}>&gt;&gt;</NavBtn>
          </NavRow>
        </Panel>
        <Panel $h={100}><MacdChart /></Panel>
        <Panel $h={100}><IcvChart /></Panel>
        <Panel $h={100}><StochChart /></Panel>
      </Charts>
      <Side>
        <BtnStack $gap={2.8}>
          {SideButtons.map((b) => (
            <ToolBtn key={b.key} type="button" $bare={b.bare}>{b.g}</ToolBtn>
          ))}
        </BtnStack>
        <RadioGroup $h={103} $top={36.5}>
          <RadioRow $after={6.5}><RadioInput type="radio" name="a" /></RadioRow>
          <ThreeButtons gap={4} />
        </RadioGroup>
        <RadioGroup $h={103} $top={4}>
          <RadioRow $after={8}><RadioInput type="radio" name="b" defaultChecked /></RadioRow>
          <ThreeButtons gap={2} />
        </RadioGroup>
        <RadioGroup $h={97} $top={0}>
          <RadioRow $after={6.5}><RadioInput type="radio" name="c" /></RadioRow>
          <ThreeButtons gap={3} />
        </RadioGroup>
      </Side>
    </Body>
    <Footer>
      <Symbol>VOLATILITY SP 500 (^VIX)</Symbol>
      <FilePath>/Users/mserra/Library/CloudStorage/Dropbox/WorkDB/DatosBolsa/Configs/Config.DEFAULT.xml</FilePath>
      <OffLamp>OFF</OffLamp>
    </Footer>
  </Page>
);

export default App;
